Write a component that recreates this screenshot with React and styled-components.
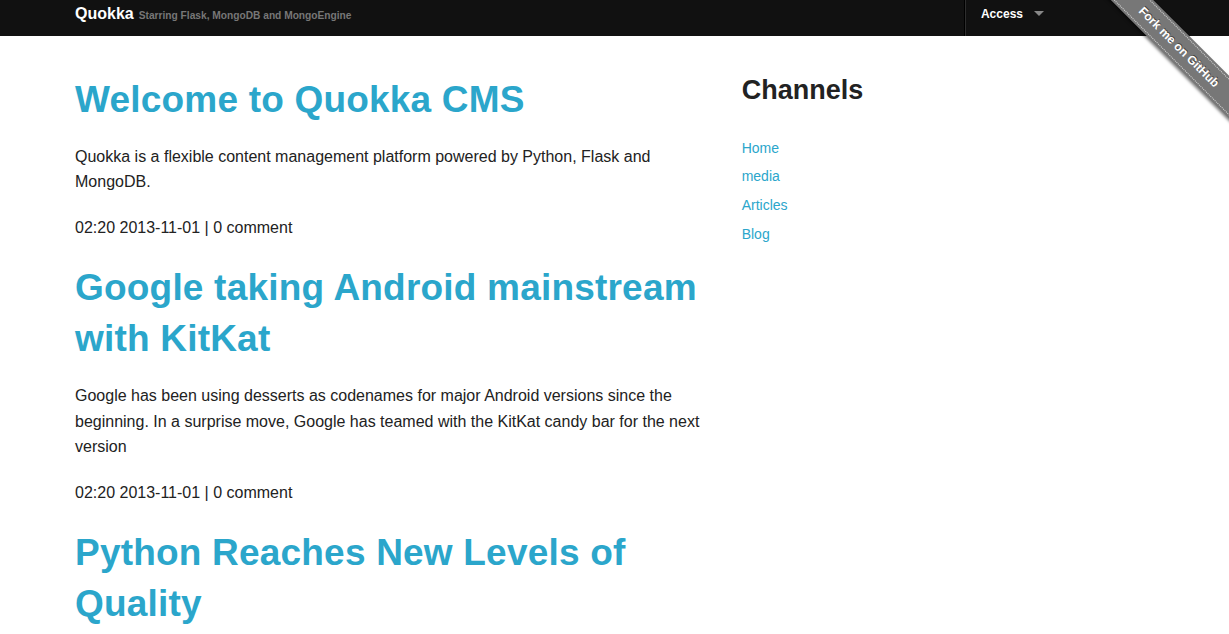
import React from "react";
import styled, { createGlobalStyle } from "styled-components";

const Global = createGlobalStyle`
  html, body { margin: 0; padding: 0; background: #fff; }
  body {
    font-family: "Liberation Sans", Arial, Helvetica, sans-serif;
    color: #222;
    font-size: 16px;
    overflow: hidden;
  }
  * { box-sizing: border-box; }
`;

const TopBar = styled.nav`
  height: 36px;
  background: #111;
  display: flex;
  align-items: stretch;
  padding-left: 75px;
`;

const Brand = styled.div`
  display: flex;
  align-items: baseline;
  gap: 5px;
  padding-top: 5px;
  line-height: 18px;
  flex: 1;
`;

const BrandName = styled.a`
  color: #fff;
  font-weight: 700;
  font-size: 16px;
  text-decoration: none;
`;

const Tagline = styled.small`
  color: #777;
  font-weight: 700;
  font-size: 10.2px;
`;

const RightSection = styled.ul`
  list-style: none;
  margin: 0 185px 0 0;
  padding: 0;
  display: flex;
`;

const Divider = styled.li`
  width: 2px;
  border-left: 1px solid #000;
  border-right: 1px solid #2e2e2e;
`;

const Dropdown = styled.li`
  display: flex;
  align-items: flex-start;
  padding: 7px 0 0 15px;
  color: #fff;
  font-weight: 700;
  font-size: 12px;
  line-height: 15px;
`;

const Caret = styled.span`
  width: 0;
  height: 0;
  margin: 4px 0 0 11px;
  border-style: solid;
  border-width: 5px 5px 0 5px;
  border-color: #888 transparent transparent transparent;
`;

const Row = styled.div`
  width: 1000px;
  margin-left: 60px;
  display: grid;
  grid-template-columns: 2fr 1fr;
`;

const Main = styled.main`
  padding: 38px 15px 0;
`;

const Side = styled.aside`
  padding: 36px 15px 0;
`;

const Title = styled.h1`
  margin: 0 0 18px;
  font-size: 37px;
  line-height: 1.4;
  font-weight: 700;
  letter-spacing: 0.2px;
  a { color: #2ba6cb; text-decoration: none; }
`;

const Para = styled.p`
  margin: 0 0 20.5px;
  font-size: 16px;
  line-height: 1.6;
  color: #222;
`;

const SideTitle = styled.h3`
  margin: 0 0 27px;
  font-size: 27px;
  line-height: 1.4;
  font-weight: 700;
  color: #222;
`;

const SideNav = styled.ul`
  list-style: none;
  margin: 0;
  padding: 0;
  display: flex;
  flex-direction: column;
  gap: 6.7px;
`;

const SideLink = styled.a`
  display: block;
  color: #2ba6cb;
  font-size: 14px;
  line-height: 22px;
  text-decoration: none;
`;

const RibbonWrap = styled.div`
  position: absolute;
  top: 0;
  right: 0;
  width: 150px;
  height: 150px;
  overflow: hidden;
  z-index: 10;
`;

const Ribbon = styled.div`
  position: absolute;
  top: 32px;
  right: -50px;
  padding: 2px 0;
  background: #777;
  box-shadow: 0 2px 3px rgba(0, 0, 0, 0.5);
  transform: rotate(45deg);
  font: 700 12px "Liberation Sans", Arial, sans-serif;
`;

const RibbonLink = styled.a`
  display: inline-block;
  width: 200px;
  line-height: 20px;
  padding: 2px 0;
  text-align: center;
  color: #fff;
  text-decoration: none;
  text-shadow: 0 -1px rgba(0, 0, 0, 0.5);
  border-width: 1px 0;
  border-style: dotted;
  border-color: rgba(255, 255, 255, 0.7);
`;

const posts = [
  {
    title: "Welcome to Quokka CMS",
    body: "Quokka is a flexible content management platform powered by Python, Flask and MongoDB.",
  },
  {
    title: "Google taking Android mainstream with KitKat",
    body: "Google has been using desserts as codenames for major Android versions since the beginning. In a surprise move, Google has teamed with the KitKat candy bar for the next version",
  },
  {
    title: "Python Reaches New Levels of Quality",
    body: "",
  },
];

const channels = ["Home", "media", "Articles", "Blog"];

export default function App() {
  return (
    <>
      <Global />
      <TopBar>
        <Brand>
          <BrandName href="#">Quokka</BrandName>
          <Tagline>Starring Flask, MongoDB and MongoEngine</Tagline>
        </Brand>
        <RightSection>
          <Divider />
          <Dropdown>
            Access
            <Caret />
          </Dropdown>
        </RightSection>
      </TopBar>
      <RibbonWrap>
        <Ribbon>
          <RibbonLink href="#">Fork me on GitHub</RibbonLink>
        </Ribbon>
      </RibbonWrap>
      <Row>
        <Main>
          {posts.map((p) => (
            <article key={p.title}>
              <Title>
                <a href="#">{p.title}</a>
              </Title>
              {p.body && (
                <>
                  <Para>{p.body}</Para>
                  <Para>02:20 2013-11-01 | 0 comment</Para>
                </>
              )}
            </article>
          ))}
        </Main>
        <Side>
          <SideTitle>Channels</SideTitle>
          <SideNav>
            {channels.map((c) => (
              <li key={c}>
                <SideLink href="#">{c}</SideLink>
              </li>
            ))}
          </SideNav>
        </Side>
      </Row>
    </>
  );
}
